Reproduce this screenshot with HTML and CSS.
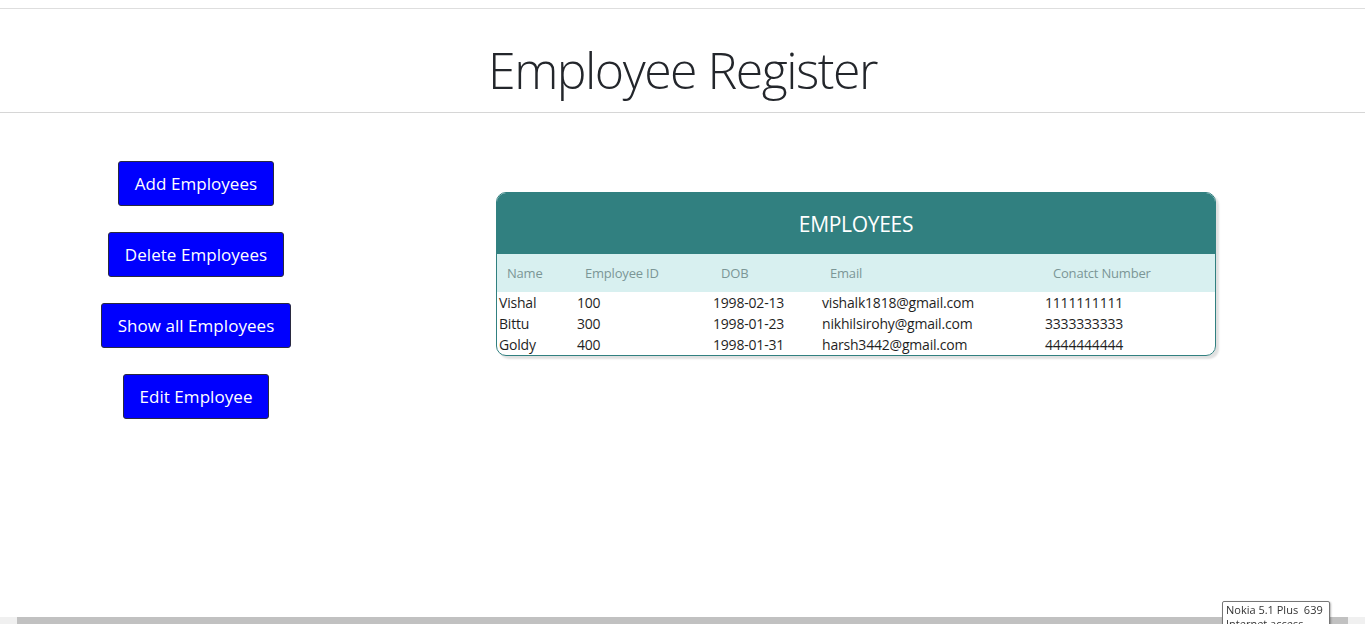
FILE: index.html
```html
<!DOCTYPE html>
<html>
<head>
<meta charset="utf-8">
<link rel="stylesheet" href="styles.css">
</head>
<body>
<div class="top-rule"></div>
<header class="masthead">
  <h1 class="title">Employee Register</h1>
</header>
<main class="layout">
  <nav class="actions">
    <button class="btn">Add Employees</button>
    <button class="btn">Delete Employees</button>
    <button class="btn">Show all Employees</button>
    <button class="btn">Edit Employee</button>
  </nav>
  <section class="card">
    <div class="card-head">EMPLOYEES</div>
    <table class="grid">
      <thead>
        <tr><th class="c-name">Name</th><th class="c-id">Employee ID</th><th class="c-dob">DOB</th><th class="c-mail">Email</th><th class="c-phone">Conatct Number</th></tr>
      </thead>
      <tbody>
        <tr><td>Vishal</td><td>100</td><td>1998-02-13</td><td>vishalk1818@gmail.com</td><td>1111111111</td></tr>
        <tr><td>Bittu</td><td>300</td><td>1998-01-23</td><td>nikhilsirohy@gmail.com</td><td>3333333333</td></tr>
        <tr><td>Goldy</td><td>400</td><td>1998-01-31</td><td>harsh3442@gmail.com</td><td>4444444444</td></tr>
      </tbody>
    </table>
  </section>
</main>
<div class="hscroll"><span class="arrow-l"></span><span class="thumb"></span><span class="arrow-r"></span></div>
<div class="tip">Nokia 5.1 Plus&nbsp; 639<br>Internet access</div>
</body>
</html>
```
FILE: styles.css
```css
html, body {
  margin: 0;
  padding: 0;
  background: #fff;
  font-family: "Open Sans", "Liberation Sans", sans-serif;
  color: #212529;
  overflow: hidden;
  height: 624px;
}
.top-rule {
  height: 8px;
  border-bottom: 1px solid #dedede;
}
.masthead {
  height: 103px;
  border-bottom: 1px solid #d6d6d6;
  display: flex;
  align-items: center;
  justify-content: center;
}
.title {
  margin: 0;
  margin-top: 18px;
  font-weight: 300;
  font-size: 50px;
  letter-spacing: -1.5px;
  line-height: 1;
  color: #23262b;
}
.layout {
  display: flex;
  align-items: flex-start;
}
.actions {
  width: 392px;
  display: flex;
  flex-direction: column;
  align-items: center;
  gap: 26px;
  padding-top: 48px;
}
.btn {
  height: 45px;
  padding: 0 16px;
  background: #0000fe;
  color: #fff;
  border: 1px solid #2a2a40;
  border-radius: 3px;
  font-family: "Open Sans", "Liberation Sans", sans-serif;
  font-size: 17px;
  letter-spacing: 0.05px;
}
.card {
  margin-top: 79px;
  margin-left: 104px;
  width: 718px;
  border: 1px solid #318080;
  border-radius: 10px;
  overflow: hidden;
  box-shadow: 3px 3px 2px rgba(0,0,0,0.12);
}
.card-head {
  height: 61px;
  background: #318080;
  color: #fff;
  font-size: 21px;
  display: flex;
  align-items: center;
  justify-content: center;
  letter-spacing: -0.3px;
}
.grid {
  width: 100%;
  border-collapse: collapse;
  font-size: 13px;
}
.grid th {
  background: #d8f0f0;
  color: #7b9696;
  font-weight: 400;
  text-align: left;
  height: 38px;
  padding: 0 0 0 10px;
  letter-spacing: -0.2px;
}
.grid td {
  padding: 0 0 0 2px;
  height: 21px;
  font-size: 14px;
  color: #1f1f1f;
  letter-spacing: -0.2px;
}
.c-name { width: 68px; }
.c-id { width: 126px; }
.c-dob { width: 99px; }
.c-mail { width: 213px; }
.hscroll {
  position: fixed;
  left: 0;
  right: 0;
  bottom: 0;
  height: 7px;
  background: #f0f0f0;
  display: flex;
}
.arrow-l { width: 17px; }
.thumb { flex: 1; background: #c1c1c1; margin-right: 17px; }
.tip {
  position: fixed;
  left: 1222px;
  top: 601px;
  width: 100px;
  padding: 1px 3px;
  font-size: 11px;
  line-height: 14px;
  background: #fff;
  border: 1px solid #767676;
  border-radius: 2px;
  color: #333;
  box-shadow: 1px 1px 2px rgba(0,0,0,0.3);
  white-space: nowrap;
}
```
